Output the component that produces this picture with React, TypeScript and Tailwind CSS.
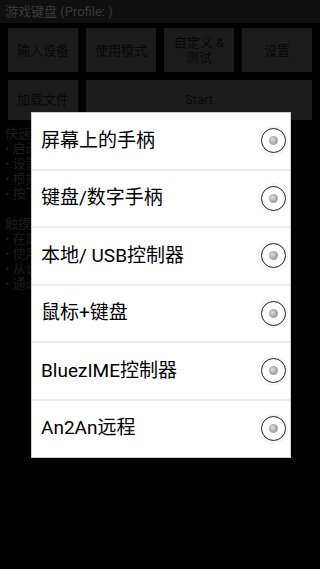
import React from "react";

const items = [
  "屏幕上的手柄",
  "键盘/数字手柄",
  "本地/ USB控制器",
  "鼠标+键盘",
  "BluezIME控制器",
  "An2An远程",
];

function Radio() {
  return (
    <div className="w-[30px] h-[30px] rounded-full flex items-center justify-center bg-[radial-gradient(circle,#ffffff_55%,#eeeeee_75%,#ffffff_100%)]">
      <div className="w-[25px] h-[25px] rounded-full border-[1.75px] border-[#1e1e1e] bg-white flex items-center justify-center">
        <div className="w-[9px] h-[9px] rounded-full bg-[radial-gradient(circle_at_40%_40%,#e0e0e0_0%,#a0a0a0_60%,#c0c0c0_100%)]" />
      </div>
    </div>
  );
}

export default function App() {
  const font = { fontFamily: '"Roboto", "Noto Sans CJK SC", sans-serif' };
  return (
    <div className="relative w-[320px] h-[569px] bg-black overflow-hidden" style={font}>
      {/* Background app (dimmed) */}
      <div className="h-[23px] bg-[#0f0f0f] flex items-center px-[5px] text-[13px] text-[#3a3a3a]">
        游戏键盘 (Profile: )
      </div>
      <div className="px-2 pt-[5px] flex flex-col gap-[8px]">
        <div className="grid grid-cols-4 gap-2">
          {["输入设备", "使用模式", "自定义 & 测试", "设置"].map((t) => (
            <div
              key={t}
              className="h-[44px] bg-[#1c1c1c] flex items-center justify-center text-center text-[13px] leading-[15px] text-[#070707] px-[6px]"
            >
              {t}
            </div>
          ))}
        </div>
        <div className="flex gap-2">
          <div className="w-[70px] h-[40px] bg-[#1c1c1c] flex items-center justify-center text-[13px] text-[#070707]">
            加载文件
          </div>
          <div className="flex-1 h-[40px] bg-[#1c1c1c] flex items-center justify-center text-[13px] text-[#070707]">
            Start
          </div>
        </div>
      </div>
      <div className="px-[5px] pt-[6px] text-[13px] leading-[15px] text-[#1c1c1c]">
        <div>快速入门:</div>
        <div>• 启动游戏前先选择</div>
        <div>• 设置使用模式</div>
        <div>• 根据需要自定义</div>
        <div>• 按下Start开始</div>
        <div className="mt-[15px]">触摸屏说明:</div>
        <div>• 在屏幕上放置虚拟按键 (可选)</div>
        <div>• 使用多点触控</div>
        <div>• 从设置中调整</div>
        <div>• 通过菜单保存</div>
      </div>

      {/* Overlay dialog */}
      <div className="absolute left-[31px] top-[112px] w-[260px] bg-white border border-[#cfcfcf]">
        {items.map((t, i) => (
          <div
            key={t}
            className={`flex items-center justify-between pl-[9px] pr-[2px] ${
              i < items.length - 1 ? "h-[57.5px] border-b-2 border-[#ebebeb]" : "h-[56px]"
            }`}
          >
            <span className="text-[19px] text-black">{t}</span>
            <Radio />
          </div>
        ))}
      </div>
    </div>
  );
}
